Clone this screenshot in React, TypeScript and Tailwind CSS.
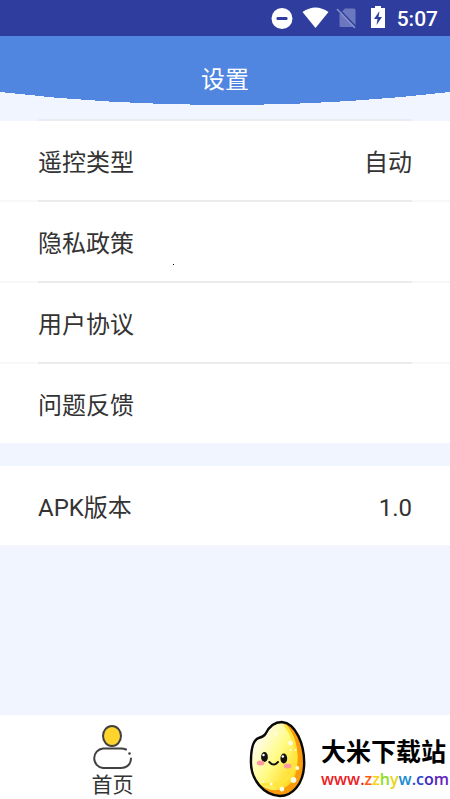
import React from "react";

function StatusBar() {
  return (
    <div className="flex h-9 items-center justify-end bg-[#2f3d9e] pr-3 text-white">
      <svg className="mr-2 h-6 w-6" viewBox="0 0 24 24" aria-hidden="true">
        <circle cx="13" cy="12.500" r="10.500" fill="currentColor" />
        <rect x="7.500" y="11" width="11" height="3" rx="1" fill="#2f3d9e" />
      </svg>
      <svg className="mr-1.5 h-6 w-7" viewBox="0 0 28 24" aria-hidden="true">
        <path d="M1.500 6 Q14.500 -3 27.500 6 L14.500 22 Z" fill="currentColor" />
      </svg>
      <svg className="mr-1.5 h-6 w-6" viewBox="0 0 24 24" aria-hidden="true">
        <path d="M10 2.500 H19 Q20.500 2.500 20.500 4 V19.500 Q20.500 21 19 21 H6 Q4.500 21 4.500 19.500 V8 Z" fill="#6b78bf" />
        <path d="M4 3 L22 22" stroke="#2f3d9e" strokeWidth="1.500" />
        <path d="M2 3 L20 22" stroke="#8791cb" strokeWidth="1.500" />
      </svg>
      <svg className="mr-2 h-6 w-6" viewBox="0 0 24 24" aria-hidden="true">
        <path d="M10 0 H16 V2 H20 V22 H6 V2 H10 Z" fill="currentColor" />
        <path d="M14.500 5 L9 13 H12.500 L11.500 19 L17 11 H13.500 Z" fill="#2f3d9e" />
      </svg>
      <span className="pt-0.5 font-['Roboto',sans-serif] text-[21px] leading-6 font-medium">5:07</span>
    </div>
  );
}

function Header() {
  return (
    <header>
      <div className="flex h-14 items-end justify-center bg-[#5085e0]">
        <h1 className="text-2xl leading-6 text-white">设置</h1>
      </div>
      <svg className="block h-[13px] w-full" viewBox="0 0 450 13" preserveAspectRatio="none" shapeRendering="crispEdges" aria-hidden="true">
        <path d="M0 0 Q225 26 450 0 Z" fill="#5085e0" />
      </svg>
    </header>
  );
}

function Divider() {
  return (
    <div className="h-0.5 bg-[#f8f8f8] px-[38px]">
      <div className="h-full bg-[#ebebeb]" />
    </div>
  );
}

function Row({ label, value, speck }: { label: string; value?: string; speck?: boolean }) {
  return (
    <button type="button" className="relative flex h-[79px] w-full items-center justify-between bg-white px-[38px] pt-1 text-2xl">
      <span>{label}</span>
      {value && <span>{value}</span>}
      {speck && <span className="absolute top-[62px] left-[173px] h-px w-px bg-black" />}
    </button>
  );
}

function ProfileIcon() {
  return (
    <svg className="h-[46px] w-[42px]" viewBox="0 0 42 46" fill="none" stroke="#414141" strokeWidth="2" strokeLinecap="round" aria-hidden="true">
      <ellipse cx="20" cy="11" rx="9" ry="10" fill="#ffd52d" />
      <path d="M34 24.500 Q32 23.500 29 23.500 H11 A9.800 9.800 0 0 0 11 43 H29 Q38.500 42.500 39 33.500" />
      <circle cx="37.500" cy="28.500" r="1.300" fill="#414141" stroke="none" />
    </svg>
  );
}

const grainOutline =
  "M17 14 C21 6 27 2 34 2 C48 3 58 24 57 46 C56 64 45 76 32 76 C15 75 2 60 2 42 C2 30 4 20 10 18 Q15 17 17 14 Z";

function RiceMascot() {
  return (
    <svg className="h-[78px] w-[58px] shrink-0" viewBox="0 0 60 78" preserveAspectRatio="none" aria-hidden="true">
      <defs>
        <linearGradient id="grain" x1="0.2" y1="0.2" x2="0.9" y2="0.8">
          <stop offset="0" stopColor="#fffde8" />
          <stop offset="0.5" stopColor="#fffb84" />
          <stop offset="1" stopColor="#ffda24" />
        </linearGradient>
      </defs>
      <path d={grainOutline} fill="#f99b0b" />
      <path d="M17 14 C21 6 27 2 34 3 C45 8 52 26 50 43 C49 61 41 68 29 70 Q19 71 11 64 C4 57 2 50 2 42 C2 30 4 20 10 18 Q15 17 17 14 Z" fill="url(#grain)" />
      <path d="M37 5 C46 15 50 30 48 43 C45 61 30 67 13 64" fill="none" stroke="#ffe53c" strokeWidth="3" />
      <path d={grainOutline} fill="none" stroke="#090909" strokeWidth="2.500" strokeLinejoin="round" />
      <ellipse cx="16" cy="37" rx="3.500" ry="5" fill="#111" />
      <ellipse cx="36" cy="38.500" rx="3.500" ry="5" fill="#111" />
      <circle cx="15" cy="35" r="1.300" fill="#fff" />
      <circle cx="35" cy="36.500" r="1.300" fill="#fff" />
      <path d="M21 42 Q25.500 47 30 42" fill="none" stroke="#111" strokeWidth="2" strokeLinecap="round" />
      <ellipse cx="12" cy="43" rx="4" ry="2.500" fill="#ff9b9f" />
      <ellipse cx="40" cy="46" rx="4" ry="2.500" fill="#ff9b9f" />
      <g fill="#fffde2">
        <circle cx="43" cy="23" r="2.500" />
        <circle cx="28" cy="14" r="1.500" />
        <circle cx="50" cy="48" r="2" />
        <circle cx="46" cy="60" r="3" />
        <circle cx="34" cy="69" r="2.500" />
        <circle cx="23" cy="64" r="1.500" />
        <circle cx="15" cy="62" r="1" />
        <circle cx="43" cy="30" r="1" />
        <circle cx="48" cy="30" r="1" />
      </g>
    </svg>
  );
}

function SiteBrand() {
  return (
    <a href="#site" className="flex items-center text-black">
      <RiceMascot />
      <span className="ml-3.5 block pt-3 whitespace-nowrap">
        <span className="block text-[25px] leading-7 font-bold">大米下载站</span>
        <span className="block font-['Open_Sans',sans-serif] text-base leading-6 font-semibold">
          <span className="text-[#ed1c24]">www.</span>
          <span className="text-[#ff5a12]">z</span>
          <span className="text-[#f8d317]">z</span>
          <span className="text-[#8edd25]">h</span>
          <span className="text-[#e6d51c]">y</span>
          <span className="text-[#168bd2]">w</span>
          <span className="text-[#2446cf]">.c</span>
          <span className="text-[#3e28bd]">o</span>
          <span className="text-[#6422bd]">m</span>
        </span>
      </span>
    </a>
  );
}

export default function App() {
  return (
    <div className="flex min-h-screen flex-col overflow-x-hidden bg-[#f1f5ff] font-['Roboto','Noto_Sans_CJK_SC',sans-serif] text-[#333333]">
      <StatusBar />
      <Header />
      <main className="flex-1 pt-3.5">
        <div className="px-[38px]">
          <div className="h-0.5 bg-[#ebecf1]" />
        </div>
        <section>
          <Row label="遥控类型" value="自动" />
          <Divider />
          <Row label="隐私政策" speck />
          <Divider />
          <Row label="用户协议" />
          <Divider />
          <Row label="问题反馈" />
        </section>
        <section className="mt-[23px] border-b-2 border-[#f3f5f9]">
          <Row label="APK版本" value="1.0" />
        </section>
      </main>
      <nav className="grid h-[84px] grid-cols-2 bg-white">
        <button type="button" className="flex flex-col items-center pt-2.5 text-[21px] leading-7">
          <ProfileIcon />
          <span>首页</span>
        </button>
        <div className="flex items-center pt-1 pl-6">
          <SiteBrand />
        </div>
      </nav>
    </div>
  );
}
